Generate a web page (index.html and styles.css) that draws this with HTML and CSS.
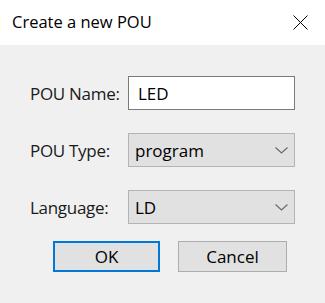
FILE: index.html
```html
<!DOCTYPE html>
<html lang="en">

<head>
	<meta charset="UTF-8">
	<meta name="viewport" content="width=device-width, initial-scale=1.0">
	<title>Create a new POU</title>
	<link rel="stylesheet" href="styles.css">
</head>

<body>
	<div class="dialog">
		<div class="titleBar">
			<span class="title">Create a new POU</span>
			<svg class="close" width="15" height="15" viewBox="0 0 15 15">
				<path d="M0.5 0.5 L14.5 14.5 M14.5 0.5 L0.5 14.5" stroke="#000" stroke-width="1" fill="none" />
			</svg>
		</div>
		<form class="content">
			<div class="fields">
				<label for="pouName">POU Name:</label>
				<input type="text" id="pouName" class="field textField" value="LED">

				<label for="pouType">POU Type:</label>
				<div class="field selectField" id="pouType">
					<span>program</span>
					<svg class="chevron" width="13" height="7" viewBox="0 0 13 7">
						<path d="M0.5 0.5 L6.5 6 L12.5 0.5" stroke="#6a6a6a" stroke-width="1.2" fill="none" />
					</svg>
				</div>

				<label for="language">Language:</label>
				<div class="field selectField" id="language">
					<span>LD</span>
					<svg class="chevron" width="13" height="7" viewBox="0 0 13 7">
						<path d="M0.5 0.5 L6.5 6 L12.5 0.5" stroke="#6a6a6a" stroke-width="1.2" fill="none" />
					</svg>
				</div>
			</div>
			<div class="buttons">
				<button type="button" class="btn okBtn">OK</button>
				<button type="button" class="btn">Cancel</button>
			</div>
		</form>
	</div>
</body>

</html>
```

FILE: styles.css
```css
body {
	margin: 0;
	font-family: "Open Sans", "Noto Sans", sans-serif;
	color: #000;
	background-color: #f0f0f0;
}

.dialog {
	width: 325px;
	height: 303px;
	background-color: #f0f0f0;
}

.titleBar {
	height: 45px;
	background-color: #fff;
	display: flex;
	align-items: center;
	justify-content: space-between;
	padding: 0 17px 0 12px;
}

.title {
	font-size: 16.5px;
	margin-top: -2px;
}

.close {
	display: block;
	margin-top: -1px;
}

.content {
	padding: 31px 0 0 30px;
}

.fields {
	display: grid;
	grid-template-columns: 98px 167px;
	row-gap: 23px;
	align-items: center;
}

label {
	font-size: 17px;
	letter-spacing: -0.3px;
	color: #1a1a1a;
}

.field {
	box-sizing: border-box;
	height: 34px;
	font-family: inherit;
	font-size: 17px;
	color: #000;
}

.textField {
	border: 1px solid #7a7a7a;
	background-color: #fff;
	padding: 0 9px;
	outline: none;
}

.selectField {
	border: 1px solid #b4b4b4;
	background-color: #e1e1e1;
	display: flex;
	align-items: center;
	justify-content: space-between;
	padding: 0 6px 0 6px;
}

.chevron {
	display: block;
}

.buttons {
	display: flex;
	gap: 18px;
	margin: 17px 0 0 23px;
}

.btn {
	box-sizing: border-box;
	width: 109px;
	height: 31px;
	border: 1px solid #adadad;
	background-color: #e1e1e1;
	font-family: inherit;
	font-size: 17px;
	color: #000;
	padding: 0;
}

.okBtn {
	width: 107px;
	border: 2px solid #0078d7;
}
```
